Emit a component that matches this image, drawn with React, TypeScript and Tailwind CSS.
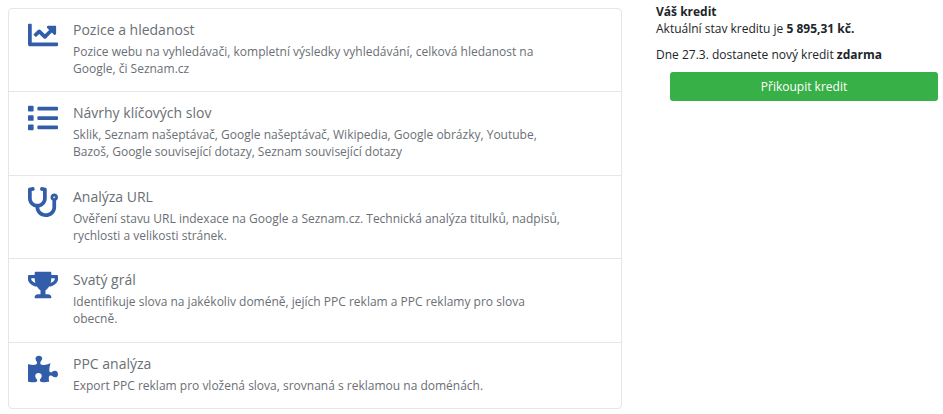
import { FaChartLine, FaList, FaPuzzlePiece, FaStethoscope, FaTrophy } from 'react-icons/fa'

const tools = [
  {
    icon: FaChartLine,
    title: 'Pozice a hledanost',
    text: 'Pozice webu na vyhledávači, kompletní výsledky vyhledávání, celková hledanost na Google, či Seznam.cz',
  },
  {
    icon: FaList,
    title: 'Návrhy klíčových slov',
    text: 'Sklik, Seznam našeptávač, Google našeptávač, Wikipedia, Google obrázky, Youtube, Bazoš, Google související dotazy, Seznam související dotazy',
  },
  {
    icon: FaStethoscope,
    title: 'Analýza URL',
    text: 'Ověření stavu URL indexace na Google a Seznam.cz. Technická analýza titulků, nadpisů, rychlosti a velikosti stránek.',
  },
  {
    icon: FaTrophy,
    title: 'Svatý grál',
    text: 'Identifikuje slova na jakékoliv doméně, jejích PPC reklam a PPC reklamy pro slova obecně.',
  },
  {
    icon: FaPuzzlePiece,
    title: 'PPC analýza',
    text: 'Export PPC reklam pro vložená slova, srovnaná s reklamou na doménách.',
  },
]

function ToolList() {
  return (
    <ul className="flex flex-col rounded border border-[#e6e6e6] divide-y divide-[#e6e6e6]">
      {tools.map(({ icon: Icon, title, text }) => (
        <li key={title} className="flex grow items-start gap-[15px] pl-[19px] pr-[54px] pt-[11px] pb-[14px]">
          <Icon className="h-auto w-[30px] shrink-0 text-[#325ea9]" />
          <div>
            <h3 className="text-sm leading-5 text-[#6a6f75]">{title}</h3>
            <p className="mt-[3px] text-xs leading-[17px] text-[#6a6f75]">{text}</p>
          </div>
        </li>
      ))}
    </ul>
  )
}

function Credit() {
  return (
    <aside className="text-xs leading-[17px] text-[#212529]">
      <h3 className="font-bold">Váš kredit</h3>
      <p>
        Aktuální stav kreditu je <strong>5 895,31 kč.</strong>
      </p>
      <p className="mt-[9px]">
        Dne 27.3. dostanete nový kredit <strong>zdarma</strong>
      </p>
      <div className="mt-[9px] pl-[14px]">
        <button
          type="button"
          className="w-full rounded-[3px] bg-[#38b048] py-[6px] text-xs leading-[17px] text-white"
        >
          Přikoupit kredit
        </button>
      </div>
    </aside>
  )
}

export default function App() {
  return (
    <main className="grid min-h-screen grid-cols-[614fr_282fr] gap-x-[34px] bg-white pl-2 pr-[5px] pb-[5px] font-['Open_Sans','Noto_Sans',sans-serif]">
      <div className="grid pt-2">
        <ToolList />
      </div>
      <div className="pt-[3px]">
        <Credit />
      </div>
    </main>
  )
}
